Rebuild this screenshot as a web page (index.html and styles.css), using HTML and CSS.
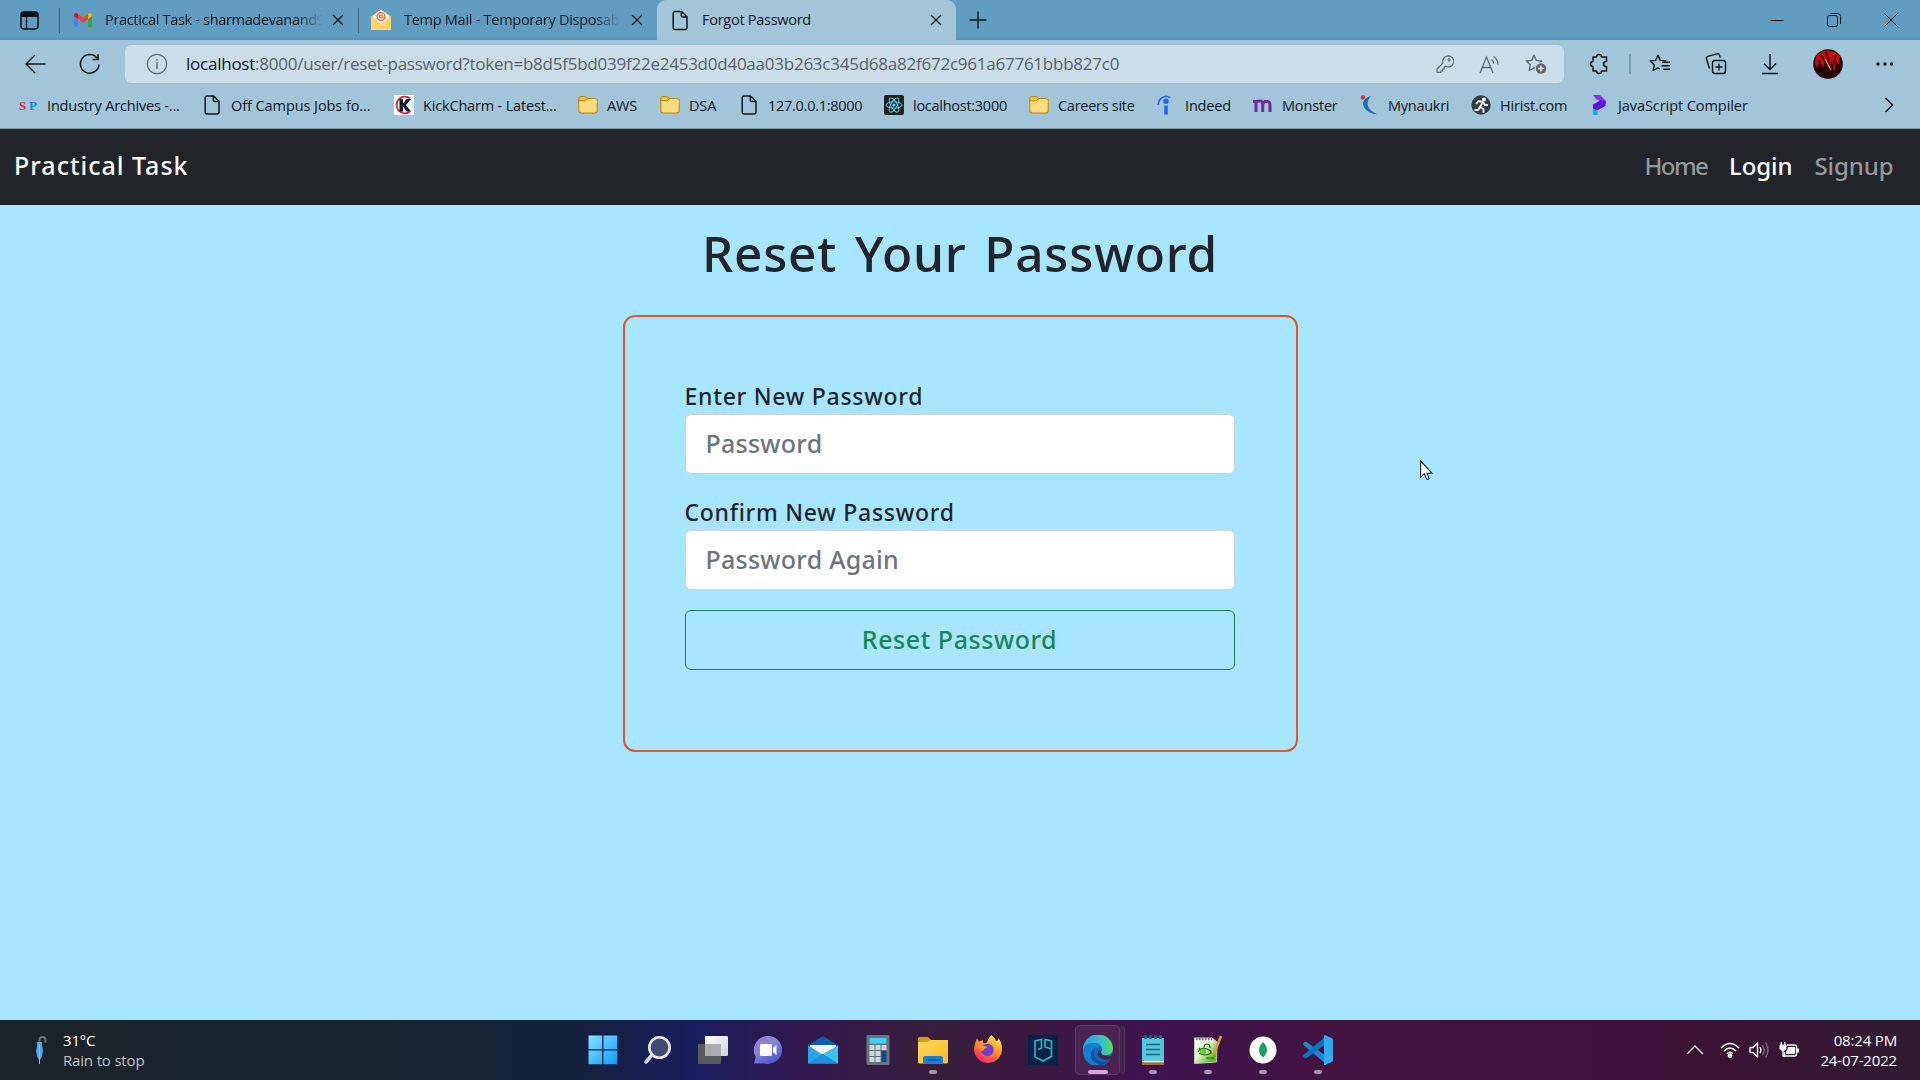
FILE: index.html
```html
<!DOCTYPE html>
<html lang="en">
<head>
<meta charset="utf-8">
<title>Forgot Password</title>
<link rel="stylesheet" href="styles.css">
</head>
<body>
<svg width="0" height="0" class="defs">
  <defs>
    <symbol id="page" viewBox="0 0 20 20"><path d="M5.2 1h6.3L17 6.3v10.6a2 2 0 0 1-2 2H5.2a2 2 0 0 1-2-2V3a2 2 0 0 1 2-2z M11.3 1v4a1.5 1.5 0 0 0 1.5 1.5H17" fill="none" stroke="#10181d" stroke-width="1.5"/></symbol>
    <symbol id="folder" viewBox="0 0 20 20"><path d="M.8 4.6h18.4v10.9a2.5 2.5 0 0 1-2.5 2.5H3.300a2.500 2.500 0 0 1-2.500-2.500z" fill="#ffdc7c" stroke="#b5871a" stroke-width="1.1"/><path d="M.8 5V3.400A1.900 1.900 0 0 1 2.700 1.500H7.300L9.400 3.300 7.300 5.800H2A1.200 1.200 0 0 1 .8 5z" fill="#f7c02c" stroke="#b5871a" stroke-width="1"/><path d="M9.400 3.500h7.800a2 2 0 0 1 2 2V8H10z" fill="#ffdc7c"/><path d="M9.400 3.500h7.300a2.500 2.500 0 0 1 2.500 2.500" fill="none" stroke="#b5871a"/></symbol>
    <symbol id="close" viewBox="0 0 12 12"><path d="M1 1l10 10M11 1L1 11" stroke="#10181d" stroke-width="1.4"/></symbol>
    <symbol id="star" viewBox="0 0 22 22"><path d="M9 2.200l2.300 5.200 5.500.6-4.200 3.800 1.200 5.700L9 14.800l-4.800 2.700 1.100-5.700L1.200 8l5.500-.6z" fill="none" stroke-width="1.4" stroke-linejoin="round"/></symbol>
  </defs>
</svg>

<header class="tabbar">
  <div class="workspace"><svg width="19" height="19" viewBox="0 0 19 19"><rect x="1" y="1" width="17" height="17" rx="3" fill="none" stroke="#0a1216" stroke-width="1.500"/><path d="M1 4a3 3 0 0 1 3-3h11a3 3 0 0 1 3 3v2H1z" fill="#0a1216"/><path d="M6.500 5v13" stroke="#0a1216" stroke-width="1.300"/></svg></div>
  <div class="tab tab-mail">
    <svg width="18" height="14" viewBox="0 0 18 14"><path d="M0 2.500V13q0 1 1 1h3V5.500z" fill="#4285f4"/><path d="M18 2.500V13q0 1-1 1h-3V5.500z" fill="#34a853"/><path d="M0 2.500Q0 0 2 0q1 0 2 1l5 4 5-4v5.500L9 9.600 4 5.800 0 3z" fill="#ea4335"/><path d="M14 1q1-1 2-1 2 0 2 2.500V3l-4 3z" fill="#fbbc04"/><path d="M0 2.500Q0 0 2 0q1 0 2 1v4.800L0 3z" fill="#c5221f"/></svg>
    <span class="tab-title faded">Practical Task - sharmadevanand9</span>
    <svg class="x" width="12" height="12"><use href="#close"/></svg>
  </div>
  <div class="tab tab-temp">
    <svg width="20" height="20" viewBox="0 0 20 20"><path d="M0 6.500L10 0l10 6.500V20H0z" fill="#fbd05c"/><path d="M2.500 5L10 0l7.500 5v3.500L10 14 2.500 8.500z" fill="#fff1e4"/><circle cx="10" cy="6.500" r="3.900" fill="none" stroke="#ec5b3c" stroke-width="1.300"/><circle cx="10" cy="6.500" r="1.500" fill="none" stroke="#ec5b3c" stroke-width="1.200"/><path d="M0 8l10 6.500L20 8v12H0z" fill="#ffd166"/></svg>
    <span class="tab-title faded">Temp Mail - Temporary Disposab</span>
    <svg class="x" width="12" height="12"><use href="#close"/></svg>
  </div>
  <div class="tab tab-active">
    <svg width="20" height="21"><use href="#page"/></svg>
    <span class="tab-title">Forgot Password</span>
    <svg class="x" width="12" height="12"><use href="#close"/></svg>
  </div>
  <svg class="plus" width="18" height="18" viewBox="0 0 18 18"><path d="M9 .5v17M.5 9h17" stroke="#10181d" stroke-width="1.400"/></svg>
  <div class="window-controls">
    <svg width="14" height="14"><path d="M.5 7.500h13" stroke="#10181d"/></svg>
    <svg width="14" height="14" fill="none" stroke="#10181d"><rect x=".5" y="2.500" width="10" height="11" rx="2"/><path d="M3.500.5h7a3 3 0 0 1 3 3V11"/></svg>
    <svg width="14" height="14"><path d="M.5.5l13 13M13.500.5l-13 13" stroke="#10181d"/></svg>
  </div>
</header>

<div class="toolbar">
  <svg width="21" height="20" viewBox="0 0 21 20" fill="none" stroke="#10181d" stroke-width="1.500"><path d="M20.500 10H1M10 1L1 10l9 9"/></svg>
  <svg class="refresh" width="22" height="22" viewBox="0 0 22 22" fill="none" stroke="#10181d" stroke-width="1.500"><path d="M20 11.500A9.300 9.300 0 1 1 18.300 5.500M19 1.200V6.500H13.500"/></svg>
  <div class="address">
    <svg width="22" height="22" viewBox="0 0 22 22" fill="none" stroke="#5f6a70" stroke-width="1.200"><circle cx="11" cy="11" r="9.700"/><path d="M11 9.500V16M11 6v1.600" stroke-width="1.400"/></svg>
    <span class="url"><b>localhost</b>:8000/user/reset-password?token=b8d5f5bd039f22e2453d0d40aa03b263c345d68a82f672c961a67761bbb827c0</span>
    <div class="address-icons">
      <svg width="18" height="18" viewBox="0 0 18 18" fill="none" stroke="#626d73" stroke-width="1.200"><path d="M11.500 1a5.500 5.500 0 1 1-2 10.200L8.200 12.500v1.700H6.500V16H4.800v1.300H1V14l6-6A5.400 5.400 0 0 1 11.500 1z" stroke-linejoin="round"/><circle cx="13" cy="4.800" r="1"/></svg>
      <svg width="21" height="19" viewBox="0 0 21 19" fill="none" stroke="#626d73" stroke-width="1.300"><path d="M1 18L7.500 2 14 18M3.200 12.500h8.600M12.500 4.500q2 1.500 2 4M14.500 1.500q4.500 3 4.500 8"/></svg>
      <svg width="23" height="22" viewBox="0 0 23 22"><use href="#star" width="22" height="22" stroke="#626d73"/><circle cx="16" cy="15.500" r="6.200" fill="#cadde8"/><circle cx="16" cy="15.500" r="5.200" fill="#5e6468"/><path d="M16 12.500v6M13 15.500h6" stroke="#fff" stroke-width="1.300"/></svg>
    </div>
  </div>
  <div class="actions">
    <svg width="20" height="22" viewBox="0 0 20 22" fill="none" stroke="#10181d" stroke-width="1.500"><path d="M4 4h3.500a2.500 2.500 0 0 1 5 0H17.500v4.500q-3 0-3 2.500t3 2.500V18H12.500a2.500 2.500 0 0 1-5 0H4V13.500a2.500 2.500 0 0 1 0-5z" stroke-linejoin="round"/></svg>
    <i></i>
    <svg width="22" height="22" viewBox="0 0 22 22"><use href="#star" width="22" height="22" stroke="#10181d"/><path d="M11.700 8.500H22V18H11z" fill="#a3c5da"/><path d="M13 9.300h8M12.500 12.800H21M14 16.300h7" stroke="#10181d" stroke-width="1.400"/></svg>
    <svg width="22" height="22" viewBox="0 0 22 22" fill="none" stroke="#10181d" stroke-width="1.400"><rect x="7.500" y="7.500" width="13" height="13" rx="2.500"/><path d="M14 10.500v7M10.500 14h7M4.500 15.500L1.500 6q-.6-2 1.300-2.700L12 .9q2-.4 2.500 1.300l.8 2.600"/></svg>
    <svg width="18" height="22" viewBox="0 0 18 22" fill="none" stroke="#10181d" stroke-width="1.500"><path d="M9 1v15.500M3 10.500l6 6 6-6M1 20.500h16"/></svg>
    <svg width="30" height="30" viewBox="0 0 30 30"><circle cx="15" cy="15" r="14.800" fill="#250407"/><path d="M3 7Q14-4 27 7l-1 9-3-5-2 13-3-12-2 10-4-12-2 10-3-9-3 8-2-5z" fill="#c80a10"/><path d="M8 5l8 17M13 3l6 17M23 6l-6 19M5 11l8 14" stroke="#30060a" stroke-width="1.500"/><path d="M12 10l6 11" stroke="#e8a8a2"/></svg>
    <svg width="18" height="6" viewBox="0 0 18 6" fill="#10181d"><circle cx="2" cy="3" r="1.700"/><circle cx="9" cy="3" r="1.700"/><circle cx="15.500" cy="3" r="1.700"/></svg>
  </div>
</div>

<nav class="bookmarks">
  <a><svg width="20" height="20"><text class="sp" x="1" y="15" fill="#e0213f">S</text><text class="sp" x="11" y="15" fill="#168bd0">P</text></svg>Industry Archives -...</a>
  <a class="loose"><svg width="20" height="20"><use href="#page"/></svg>Off Campus Jobs fo...</a>
  <a><svg width="20" height="20"><rect width="20" height="20" fill="#fff"/><path d="M16 3.500A8.300 8.300 0 1 0 16 16.500" fill="none" stroke="#d8203a" stroke-width="1.800"/><path d="M16 3.500A8.500 8.500 0 0 1 18.800 10 8.500 8.500 0 0 1 16 16.500" fill="none" stroke="#aee3f2"/><path d="M5.500 4h3.500v4.500L12.500 4H17l-5 6 5 6.500h-4.500L9 11.500v5H5.500z" fill="#0c1830"/></svg>KickCharm - Latest...</a>
  <a><svg width="20" height="20"><use href="#folder"/></svg>AWS</a>
  <a><svg width="20" height="20"><use href="#folder"/></svg>DSA</a>
  <a class="tight"><svg width="20" height="20"><use href="#page"/></svg>127.0.0.1:8000</a>
  <a class="tight"><svg width="20" height="20"><rect width="20" height="20" rx="2" fill="#212121"/><g fill="none" stroke="#61dafb" stroke-width=".9"><ellipse cx="10" cy="10" rx="8" ry="3.200"/><ellipse cx="10" cy="10" rx="8" ry="3.200" transform="rotate(60 10 10)"/><ellipse cx="10" cy="10" rx="8" ry="3.200" transform="rotate(120 10 10)"/></g><circle cx="10" cy="10" r="1.500" fill="#61dafb"/></svg>localhost:3000</a>
  <a class="tight"><svg width="20" height="20"><use href="#folder"/></svg>Careers site</a>
  <a><svg width="20" height="20" fill="none" stroke="#2164f4"><path d="M2 10Q3 2 10 1.200q2.500 0 4 1.500" stroke-width="1.600"/><circle cx="10" cy="6.200" r="2.700" fill="#2164f4" stroke="none"/><path d="M10 10.500V19.500" stroke-width="3.600"/></svg>Indeed</a>
  <a><svg width="20" height="20" fill="none" stroke="#6e2b9b" stroke-width="3"><path d="M3 17V6M0 6.500h4Q9.700 4.500 9.700 9v8M9.700 9q1-3 4-2.500 3.300-.2 3.300 3.500v7"/></svg>Monster</a>
  <a class="tight"><svg width="20" height="20"><circle cx="4" cy="2.500" r="2.200" fill="#f02c34"/><path d="M12.500.5Q.5 5 5.500 13q4 5.500 13 6.500Q9 15 8.500 9q0-5 4-8.500z" fill="#156fbd"/></svg>Mynaukri</a>
  <a><svg width="20" height="20"><circle cx="10" cy="10" r="9.700" fill="#343d4b"/><circle cx="13" cy="4.500" r="2" fill="#fff"/><path d="M12 7L9 12l3.500 2V18M9 12l-2 3H3.500M12 7L7.500 6 5 9M12 7l2 3h3" fill="none" stroke="#fff" stroke-width="1.800"/></svg>Hirist.com</a>
  <a class="loose"><svg width="20" height="20"><path d="M4 0h7l6 6v3L7 4z" fill="#9428f4"/><path d="M4 13h4.500v7H4z" fill="#18a6f7"/><path d="M4 14V9.500L12 5l4.500 2v4L9 15z" fill="#5a16df"/></svg>JavaScript Compiler</a>
  <svg class="more" width="10" height="16" fill="none" stroke="#10181d" stroke-width="1.500"><path d="M1.500 1l7 7-7 7"/></svg>
</nav>

<section class="navbar">
  <div class="brand">Practical Task</div>
  <div class="links"><a class="home">Home</a><a class="on">Login</a><a>Signup</a></div>
</section>

<main>
  <h1>Reset Your Password</h1>
  <form class="card">
    <label for="new">Enter New Password</label>
    <input id="new" type="password" placeholder="Password">
    <label for="confirm">Confirm New Password</label>
    <input id="confirm" type="password" placeholder="Password Again">
    <button type="button">Reset Password</button>
  </form>
</main>

<svg class="cursor" width="14" height="21" viewBox="0 0 14 21"><path d="M.6.8v16.400l3.700-3.500 2.200 5.200q1 1 2.600-.3L7 13.300h5z" fill="#fff" stroke="#1a2030" stroke-width="1.100"/></svg>

<footer class="taskbar">
  <div class="weather">
    <svg width="12" height="28" viewBox="0 0 12 28"><path d="M4.500 6V4a3 3 0 0 1 6 0v2.500" fill="none" stroke="#6d7074" stroke-width="2"/><path d="M2 6h5v3L8 15Q8 20 4.500 25 1 20 1 15L2.300 9z" fill="#4ba5f0"/><path d="M4.500 8v20" stroke="#8bc7f7"/></svg>
    <div><p>31°C</p><p class="dim">Rain to stop</p></div>
  </div>
  <div class="apps">
    <div class="app"><svg width="30" height="30"><defs><linearGradient id="win" x2="1" y2="1"><stop stop-color="#86e2ff"/><stop offset="1" stop-color="#0c9cfb"/></linearGradient></defs><path d="M.5.5H14.200V14.200H.5zM15.500.5H29.200V14.200H15.500zM.5 15.500H14.200V29.200H.5zM15.500 15.500H29.200V29.200H15.500z" fill="url(#win)"/></svg></div>
    <div class="app"><svg width="30" height="30"><circle cx="16.500" cy="12.500" r="10.200" fill="#424a75" stroke="#e8e8ec" stroke-width="2.600"/><path d="M9 20l-6 7" stroke="#dcdce2" stroke-width="3.500" stroke-linecap="round"/></svg></div>
    <div class="app"><svg width="30" height="30"><defs><linearGradient id="tv" x2="1" y2="1"><stop stop-color="#fff"/><stop offset="1" stop-color="#d2d2d6"/></linearGradient></defs><rect x="7" y="1" width="23" height="20" rx="1" fill="url(#tv)"/><rect y="9" width="23" height="20" rx="1" fill="#5a5a5d"/><path d="M7 9H23V21H7z" fill="#adadb0"/></svg></div>
    <div class="app"><svg width="30" height="30"><defs><linearGradient id="chat" x2=".6" y2="1"><stop stop-color="#a27abb"/><stop offset=".5" stop-color="#8086d8"/><stop offset="1" stop-color="#5056c8"/></linearGradient></defs><path d="M15 1a14 14 0 1 1-4 27.400L1 28.500 2.800 22A14 14 0 0 1 15 1z" fill="url(#chat)"/><rect x="7" y="9" width="12" height="12" rx="1.500" fill="#fff"/><path d="M20 13l3.500-3v10L20 17z" fill="#fff"/></svg></div>
    <div class="app"><svg width="30" height="30"><path d="M0 10.500L15 1l15 9.500V20H0z" fill="#0a5fb4"/><path d="M2 10h26v9H2z" fill="#f5f3f3"/><path d="M0 10.500L15 20 30 10.500V28.500H0z" fill="#2aa5e8"/><path d="M30 10.500V28.500L15 19z" fill="#39c4f1"/><path d="M0 28.500L15 19l15 9.500z" fill="#1f8fdc"/></svg></div>
    <div class="app"><svg width="30" height="30"><rect x="3.500" width="23" height="30" rx="1.500" fill="#68747d"/><rect x="6.500" y="3" width="17" height="5.500" fill="#3dd2f6"/><path d="M6.500 10h5v5h-5zM12.500 10h5v5h-5zM18.500 10h5v5h-5zM6.500 16h5v5h-5zM12.500 16h5v5h-5zM6.500 22h5v5h-5zM12.500 22h5v5h-5z" fill="#ccd6dd"/><path d="M18.500 16h5v11h-5z" fill="#0e4785"/></svg></div>
    <div class="app run"><svg width="30" height="30"><defs><linearGradient id="ex" y2="1"><stop stop-color="#ffd968"/><stop offset="1" stop-color="#fcba18"/></linearGradient></defs><path d="M0 3.500Q0 2 1.500 2H10l3 3V8H0z" fill="#dc9a07"/><path d="M0 7h9l3.500-2H30V27.500q0 1-1 1H1q-1 0-1-1z" fill="url(#ex)"/><path d="M5 28.500V23q0-2 2-2H23q2 0 2 2v5.500z" fill="#1681d2"/><path d="M8 25H22" stroke="#0a579d" stroke-width="1.300"/></svg></div>
    <div class="app"><svg width="30" height="30"><defs><linearGradient id="ff" x1=".8" x2=".2" y2="1"><stop stop-color="#fff04d"/><stop offset=".4" stop-color="#ff9b2a"/><stop offset=".75" stop-color="#fb4e4d"/><stop offset="1" stop-color="#e81c8c"/></linearGradient></defs><path d="M18.500 0q3 2 4.500 6 3-1 2.500-3 3.500 5 3.500 10.500A14 14 0 0 1 1 14.500Q1 9 4 3.500l2 3 4-1.500V8Q14 8.500 14 7 15 3 18.500 0z" fill="url(#ff)"/><circle cx="14.500" cy="15" r="6.200" fill="#713bd3"/><path d="M5 12q4-2 10 0-4 1-5 4-3 0-5-4z" fill="#ff9d27"/></svg></div>
    <div class="app"><svg width="30" height="30"><rect width="30" height="30" fill="#042248"/><g fill="none" stroke="#24b8c9" stroke-width="1.600"><path d="M7 20V6l6.500-1.500V13L10 14.500M23.500 16V6L17 4.500V12l6.500 2v7.500L15 26l-8-4v-3"/></g></svg></div>
    <div class="app current"><svg width="30" height="30"><defs><linearGradient id="ed" x2="1"><stop stop-color="#2c9fdf"/><stop offset=".6" stop-color="#31bfd1"/><stop offset="1" stop-color="#61d75a"/></linearGradient></defs><circle cx="15" cy="15" r="15" fill="#0c69b5"/><path d="M0 15A15 15 0 0 1 30 13.500q0 6-7 6.500-5 0-5-3 2-2 1-4-3-6-10-5Q3 9 0 15z" fill="url(#ed)"/><path d="M0 15Q2 8 10 8q6 0 8.500 4Q12 11 12 18q1 9 10 8.500 3 0 5.500-2A15 15 0 0 1 0 15z" fill="#137fcf"/><path d="M12.500 13q-3 6 1.500 11.500 5 4 13.500-.5-4 6-11 6Q6 25 8 18.500 9 14 12.500 13z" fill="#0e4f9b"/><path d="M18 17q0 4 7 4.500 3 0 5-3-1 4-3 5.500-6 2-10-1-4-4-1-8 2 0 2 2z" fill="#4a2353"/></svg></div>
    <div class="app run"><svg width="30" height="30"><rect x="4" y="3" width="22" height="26" rx="1" fill="#5cc5dd"/><path d="M4 26h22v1.500H4z" fill="#f3f2ee"/><path d="M4 27.500h22V30H4z" fill="#b2672a"/><path d="M8 9.500H22M8 14.500H22M8 19.500H22" stroke="#0b6986" stroke-width="1.700"/><path d="M7.500 0v4M12.500 0v4M17.500 0v4M22.500 0v4" stroke="#0b6f93" stroke-width="2.700"/></svg></div>
    <div class="app run"><svg width="30" height="30"><defs><linearGradient id="np" y2="1"><stop stop-color="#fff"/><stop offset=".45" stop-color="#dff4c8"/><stop offset=".8" stop-color="#58bc23"/></linearGradient></defs><path d="M1.500 3H19l5 4-.5 20-22 1.500z" fill="url(#np)" stroke="#c5c8c1"/><path d="M3 4h16" stroke="#777" stroke-width="2.500" stroke-dasharray="1.500 1.500"/><path d="M5 17q3-5 9-3 5 2 4 4-6 4-12 0M11 13q0-4 3-4t3 4M6 13l5 6M13 23h8" fill="none" stroke="#24571b" stroke-width="1.200"/><circle cx="10" cy="16.500" r="3" fill="#5ad421"/><path d="M28 1L21 19" stroke="#e69a20" stroke-width="2.500"/></svg></div>
    <div class="app run"><svg width="30" height="30"><circle cx="15" cy="15" r="13.500" fill="#fff"/><path d="M15 7q4 4 4 8 0 4-4 7.500-4-3.500-4-7.500 0-4 4-8z" fill="#12a45a"/></svg></div>
    <div class="app run"><svg width="30" height="30"><path d="M1 10.500q-1.500-1.500 0-3L3 6.500 23 21v8z" fill="#1689d2"/><path d="M1 19.500q-1.500 1.500 0 3l2 1L23 9V1z" fill="#0f73bb"/><path d="M22 0l7 3.200q1 .5 1 1.800V25q0 1.300-1 1.800L22 30q.8-.5.8-2V2q0-1.500-.8-2z" fill="#34a9f0"/><path d="M22 .500V30" stroke="#34a9f0" stroke-width="2"/></svg></div>
  </div>
  <div class="tray">
    <svg width="18" height="11" fill="none" stroke="#f0e9ef" stroke-width="1.400"><path d="M1 10l8-8 8 8"/></svg>
    <svg width="20" height="18" viewBox="0 0 20 18" fill="none" stroke="#fff" stroke-width="1.500"><path d="M1 7q9-9 18 0M4 10q6-6 12 0M7 12.800q3-3 6 0"/><circle cx="10" cy="14.700" r="1.600" fill="#fff"/></svg>
    <svg width="21" height="18" viewBox="0 0 21 18" fill="none" stroke="#fff" stroke-width="1.400"><path d="M1 6.500h3L8.500 2v14L4 11.500H1z" stroke-linejoin="round"/><path d="M11 6q1.800 3 0 6"/><path d="M13.500 4q3.500 5 0 10M16.500 1.500q5 7.500 0 15" opacity=".35"/></svg>
    <svg width="21" height="18" viewBox="0 0 21 18" fill="none" stroke="#fff"><path d="M8 4H15.500Q17.500 4 17.500 6v7q0 2-2 2H5.500V11" stroke-width="1.400"/><path d="M9.500 6.500h6v6h-8V10Q9.500 9 9.500 6.500z" fill="#fff"/><path d="M19 7.500v4" stroke-width="2"/><path d="M1 4h6v4Q6 9.500 4 9.500T1 8z" fill="#fff"/><path d="M2.300 1v3M5.700 1v3M4 9v6h2" stroke-width="1.300"/></svg>
    <div class="clock"><p>08:24 PM</p><p>24-07-2022</p></div>
  </div>
</footer>
</body>
</html>
```
FILE: styles.css
```css
* { box-sizing: border-box; }
body { margin: 0; width: 1920px; height: 1080px; overflow: hidden; display: flex; flex-direction: column; background: #a8e5ff; font-family: "Open Sans", "Noto Sans", sans-serif; font-size: 14.5px; letter-spacing: -.17px; color: #10181d; }
svg { display: block; flex: none; }
p { margin: 0; }
.defs { display: none; }

.tabbar { height: 40px; flex: none; display: flex; align-items: center; background: linear-gradient(#619dc0 37px, #5892b4); }
.workspace { width: 59px; padding-left: 20px; }
.tab { display: flex; align-items: center; white-space: nowrap; height: 40px; }
.tab-title { flex: 1; overflow: hidden; letter-spacing: -.27px; line-height: 24px; }
.faded { -webkit-mask-image: linear-gradient(90deg, #000 88%, transparent); mask-image: linear-gradient(90deg, #000 88%, transparent); }
.tab-mail { width: 299px; height: 25px; border-left: 1.5px solid #376784; padding: 0 14px 0 14px; }
.tab-mail .tab-title { margin-left: 13px; flex: 0 0 218px; letter-spacing: -.33px; }
.tab .x { margin-left: auto; }
.tab-temp { width: 299px; height: 25px; border-left: 1.5px solid #376784; padding: 0 14px 0 12px; }
.tab-temp .tab-title { margin-left: 13px; flex: 0 0 216px; }
.tab-active { width: 299px; padding: 0 14px 0 13px; background: #a3c5da; border-radius: 9px 9px 0 0; }
.tab-active .tab-title { margin-left: 12px; }
.plus { margin-left: 13px; }
.window-controls { margin-left: auto; display: flex; gap: 43px; padding-right: 22px; }

.toolbar { height: 48px; flex: none; display: flex; align-items: center; background: #a3c5da; padding: 0 0 0 25px; }
.refresh { margin-left: 33px; }
.address { margin-left: 24px; width: 1439px; height: 38px; border-radius: 6px; background: #cadde8; display: flex; align-items: center; padding: 0 16px 0 21px; box-shadow: 0 0 2px #94b5c9; }
.url { margin-left: 18px; font-size: 17px; letter-spacing: -.24px; color: #596368; line-height: 24px; }
.url b { font-weight: 400; color: #10181d; }
.address-icons { margin-left: auto; display: flex; align-items: center; gap: 25px; }
.actions { margin-left: 25px; display: grid; grid-template-columns: 40px 20px 56px 56px 52px 63px 18px; align-items: center; }
.actions i { width: 1.5px; height: 20px; background: #7d9db0; }

.bookmarks { height: 41px; flex: none; display: grid; grid-template-columns: 184px 192px 184px 82px 79px 145px 145px 127px 97px 106px 112px 118px 295px 10px; align-items: center; padding: 0 0 6px 18px; background: #a3c5da; border-bottom: 1px solid #7c9aaa; }
.bookmarks a { display: flex; align-items: center; gap: 9px; white-space: nowrap; }
.loose { letter-spacing: -.07px; }
.tight { letter-spacing: -.27px; }
.sp { font: bold 13px "Liberation Serif", serif; }

.navbar, main { font-family: "Noto Sans", sans-serif; font-weight: 500; }
.navbar { height: 76px; flex: none; display: flex; justify-content: space-between; align-items: center; background: #212529; padding: 0 26px 4px 14px; color: #fff; font-size: 25px; }
.brand { letter-spacing: 1px; }
.links { display: grid; grid-template-columns: 84.5px 85.5px 79.5px; font-size: 24px; letter-spacing: -.1px; }
.links a { color: #96989a; }
.links .home { letter-spacing: -1.6px; }
.links .on { color: #fff; }

main { flex: 1; display: flex; flex-direction: column; align-items: center; color: #212529; }
h1 { margin: 18px 0 32px; font-size: 49.5px; line-height: 60px; font-weight: 500; letter-spacing: .8px; word-spacing: 4px; }
.card { width: 675px; height: 437px; border: 2px solid #e95420; border-radius: 12px; padding: 62px 61px 0 60px; display: flex; flex-direction: column; }
label { font-size: 23px; line-height: 34px; padding-bottom: 1px; letter-spacing: .72px; }
input { height: 60px; margin: 0 0 21px; border: 1px solid #ced4da; border-radius: 6px; padding: 0 20px 3px; background: #fff; font: 500 25px "Noto Sans", sans-serif; letter-spacing: .25px; }
#confirm { margin-bottom: 20px; }
input::placeholder { color: #6c757d; opacity: 1; }
button { height: 60px; border: 1px solid #198754; border-radius: 6px; background: transparent; color: #198754; font: 500 25px "Noto Sans", sans-serif; letter-spacing: .55px; padding: 0 0 3px; }
.cursor { position: absolute; left: 1420px; top: 460px; }

.taskbar { height: 60px; flex: none; display: grid; grid-template-columns: 575px 770px 1fr; align-items: center; color: #fff; font-size: 15px; line-height: 20px; background: linear-gradient(90deg, #1c222a 0, #17252d 400px, #13213b 570px, #1b1d5c 700px, #30194f 800px, #391e3c 940px, #39193f 1020px, #401350 1150px, #421343 1300px, #401038 1640px, #2f1b2e 1920px); }
.weather { display: flex; align-items: center; gap: 16px; padding-left: 35px; letter-spacing: -.17px; }
.dim { color: #bdc2c6; }
.apps { display: flex; height: 60px; }
.app { width: 55px; height: 60px; display: flex; flex-direction: column; align-items: center; padding-top: 15px; }
.run::after, .current::after { content: ""; width: 8px; height: 4px; border-radius: 2px; background: #a393ab; margin-top: 5px; }
.current { width: 45px; height: 50px; margin: 5px 5px 0; padding-top: 9px; background: #4b2353; border: 1px solid #5d3a65; border-radius: 5px; box-shadow: 5px 0 0 -1px #47204f, 6px 0 0 -1px #58335f; }
.current::after { width: 20px; background: #dd9fe5; }
.tray { display: flex; align-items: center; padding: 0 23px 0 341px; }
.tray svg:nth-child(2) { margin-left: 16px; }
.tray svg:nth-child(n+3) { margin-left: 9px; }
.clock { margin-left: auto; text-align: right; letter-spacing: -.17px; white-space: nowrap; }
.clock p { line-height: 20px; }
.tray, .weather { padding-bottom: 1px; }
```
